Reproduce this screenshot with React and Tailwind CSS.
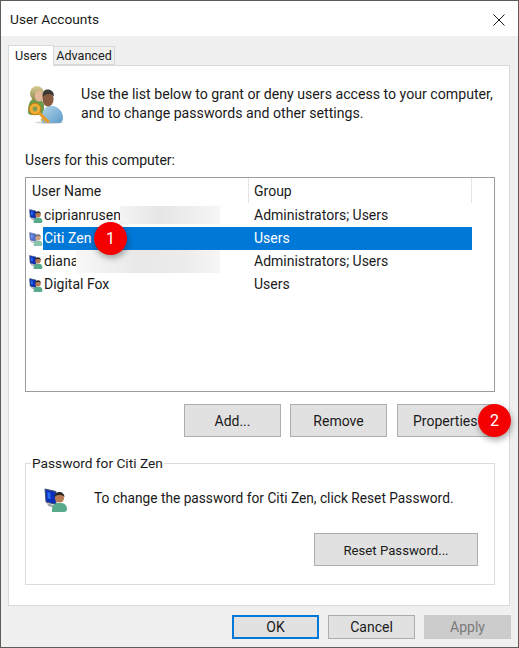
const font = "font-['Roboto',sans-serif]";

const PersonKeyIcon = () => (
  <svg width="40" height="40" viewBox="0 0 40 40" className="shrink-0 blur-[0.3px]">
    <defs>
      <linearGradient id="hairA" x1="0" y1="0" x2="0" y2="1">
        <stop offset="0" stopColor="#d6cb94" />
        <stop offset="1" stopColor="#8f8a4e" />
      </linearGradient>
      <linearGradient id="shirtB" x1="0" y1="0" x2="1" y2="1">
        <stop offset="0" stopColor="#b4d6ea" />
        <stop offset="1" stopColor="#5c9bc8" />
      </linearGradient>
    </defs>
    <ellipse cx="24" cy="37.500" rx="14" ry="1.500" fill="#d8d8d8" />
    <path d="M3 27c0-8 2-12 6-14h6l4 6v11H7c-3 0-4-1-4-3z" fill="#6f9a4a" />
    <ellipse cx="12" cy="8.500" rx="7" ry="7.500" fill="url(#hairA)" />
    <ellipse cx="14" cy="11" rx="4.200" ry="5.500" fill="#e3b79a" />
    <path d="M17 38c-1-9 1-15 6-17h5c6 1 10 6 10 12 0 3-2 5-4 5z" fill="url(#shirtB)" />
    <ellipse cx="23" cy="14" rx="5.600" ry="7.500" fill="#8a5c3f" />
    <path d="M17.500 12c0-6 2.500-7.500 5.500-7.500s6 2 6 7c-2-2-3.500-2.500-5.500-2.500s-4 1-6 3z" fill="#3b3a36" />
    <circle cx="10" cy="24" r="5.800" fill="#f0ad33" stroke="#c67f14" strokeWidth="1" />
    <circle cx="10" cy="24" r="2.400" fill="#7f9b55" />
    <path d="M14 28l9 8.500" stroke="#e89c24" strokeWidth="3" strokeLinecap="round" />
    <path d="M18.500 33l-2.500 2.500M21 35l-2 2" stroke="#e89c24" strokeWidth="1.500" />
  </svg>
);

const UserIcon = ({ size = 14, faded = false }) => (
  <svg width={size} height={size} viewBox="0 0 24 24" className={`shrink-0 blur-[0.2px] ${faded ? "opacity-70" : ""}`}>
    <path d="M1 1l11 2.500v13L2 14z" fill="#0b2fb8" stroke="#46546e" strokeWidth="1" />
    <path d="M3.500 4l3 .7v6.500l-3-1z" fill="#2a6cf0" />
    <path d="M3 15l6 2v2.500l-5-1.800z" fill="#9aa3ad" />
    <path d="M8 24c-.5-6 2-9 6-9h3c4 0 6 3 6 6 0 2-1 3-3 3z" fill="#58ab8a" />
    <circle cx="15.500" cy="10" r="4.600" fill="#b87a52" />
    <path d="M10.500 9c0-3.500 2.500-5 5-5s5 2 5 5c-1.500-1.500-3-2-5-2s-3.500.5-5 2z" fill="#2e2a26" />
  </svg>
);

const CloseIcon = () => (
  <svg width="12" height="12" viewBox="0 0 12 12" className="shrink-0">
    <path d="M.5.5l11 11M11.500.5l-11 11" stroke="#1a1a1a" strokeWidth="1" />
  </svg>
);

const Badge = ({ n, className }) => (
  <span
    className={`absolute w-[33px] h-[33px] rounded-full bg-[#f40000] text-white text-[16px] flex items-center justify-center shadow-[1px_3px_6px_rgba(0,0,0,0.35)] ${className}`}
  >
    {n}
  </span>
);

const Btn = ({ children, className = "" }) => (
  <button className={`h-[33px] bg-[#e1e1e1] border border-[#adadad] text-[#1a1a1a] ${className}`}>
    {children}
  </button>
);

const FootBtn = ({ children, className = "" }) => (
  <button className={`w-[87px] h-[24px] leading-none ${className}`}>{children}</button>
);

const users = [
  { name: "ciprianrusen", group: "Administrators; Users" },
  { name: "Citi Zen", group: "Users", selected: true },
  { name: "diana", group: "Administrators; Users" },
  { name: "Digital Fox", group: "Users" },
];

const UserRow = ({ user }) => (
  <div className="h-[23px] flex items-center pr-[22px] relative">
    <span className="w-[17px] pl-[3px] shrink-0">
      <UserIcon faded={user.selected} />
    </span>
    <div
      className={`flex-1 h-[23px] flex items-center ${user.selected ? "bg-[#0078d7] text-white" : "text-[#1a1a1a]"}`}
    >
      <span className="w-[211px] pl-px">{user.name}</span>
      <span>{user.group}</span>
    </div>
  </div>
);

const App = () => {
  return (
    <div className={`${font} w-[519px] h-[648px] bg-[#f0f0f0] border border-[#5f5c58] flex flex-col overflow-hidden text-[14px] text-[#1a1a1a]`}>
      {/* title bar */}
      <div className="h-[35px] pt-[2px] bg-white flex items-center justify-between pl-[9px] pr-[13px] shrink-0">
        <span className="text-[13.7px]">User Accounts</span>
        <CloseIcon />
      </div>

      {/* tabs */}
      <div className="h-[29px] pl-[7px] flex items-end shrink-0 relative z-10 text-[12.6px]">
        <div className="w-[46px] h-[21px] bg-white border border-b-0 border-[#d9d9d9] pl-[6px] leading-[19px] -mb-px">Users</div>
        <div className="w-[61px] h-[19px] bg-[#f0f0f0] border border-l-0 border-[#d9d9d9] text-center leading-[18px]">Advanced</div>
      </div>

      {/* panel */}
      <div className="ml-[7px] w-[502px] h-[541px] bg-white border border-[#d9d9d9] pl-[16px] pr-[14px] shrink-0">
        <div className="flex pt-[19px] h-[68px]">
          <PersonKeyIcon />
          <p className="ml-[16px] leading-[19px] whitespace-nowrap text-[14.15px]">
            Use the list below to grant or deny users access to your computer,
            <br />
            and to change passwords and other settings.
          </p>
        </div>

        <div className="mt-[17px] leading-[19px]">Users for this computer:</div>

        <div className="mt-[7px] h-[215px] border border-[#9c9c9c] bg-white relative">
          <div className="h-[26px] flex">
            <div className="w-[223px] h-[25px] pl-[6px] leading-[27px] border-r border-[#e5e5e5]">User Name</div>
            <div className="w-[223px] h-[25px] pl-[5px] leading-[27px] border-r border-[#e5e5e5]">Group</div>
          </div>
          {users.map((user) => (
            <UserRow key={user.name} user={user} />
          ))}
          {/* blurred-out names */}
          <div className="absolute left-[94px] top-[28px] w-[100px] h-[18px] bg-[linear-gradient(90deg,#f4f4f4,#e6e6e6_40%,#efefef_75%,#f6f6f6)]" />
          <div className="absolute left-[50px] top-[72px] w-[144px] h-[23px] bg-[linear-gradient(90deg,#f8f8f8,#e8e8e8_45%,#ececec_75%,#f6f6f6)]" />
          <Badge n="1" className="left-[68px] top-[44px]" />
        </div>

        <div className="mt-[12px] flex relative">
          <Btn className="ml-[159px] w-[97px] pt-0.5">Add...</Btn>
          <Btn className="ml-[9px] w-[97px] pt-0.5">Remove</Btn>
          <Btn className="ml-[10px] w-[97px] pt-0.5 pr-[5px] text-left pl-[15px] whitespace-nowrap">Properties</Btn>
          <Badge n="2" className="left-[453px] top-0" />
        </div>

        <fieldset className="mt-[18px] h-[130px] border border-[#dcdcdc]">
          <legend className="ml-[5px] px-[1px] leading-[16px] text-[13.7px]">Password for Citi Zen</legend>
          <div className="flex items-start pl-[18px] pt-[17px] h-[62px]">
            <UserIcon size={24} />
            <span className="ml-[26px] pt-px leading-[19px] whitespace-nowrap text-[13.73px]">To change the password for Citi Zen, click Reset Password.</span>
          </div>
          <div className="flex justify-end pr-[16px]">
            <Btn className="w-[164px] pt-0.5 text-[13.2px]">Reset Password...</Btn>
          </div>
        </fieldset>
      </div>

      {/* footer buttons */}
      <div className="flex pt-[9px] pl-[231px]">
        <FootBtn className="bg-[#e1e1e1] border-2 border-[#0078d7]">OK</FootBtn>
        <FootBtn className="ml-[9px] bg-[#e1e1e1] border border-[#adadad]">Cancel</FootBtn>
        <FootBtn className="ml-[9px] bg-[#cccccc] text-[#7a7a7a]">Apply</FootBtn>
      </div>
    </div>
  );
};

export default App;
